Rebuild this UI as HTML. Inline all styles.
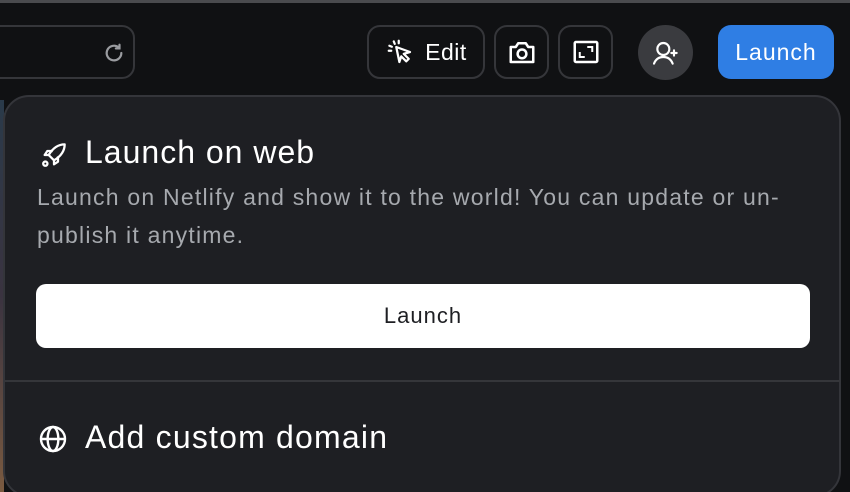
<!DOCTYPE html>
<html><head><meta charset="utf-8"><style>
*{margin:0;padding:0;box-sizing:border-box}
html,body{width:850px;height:492px;overflow:hidden}
body{background:#101113;position:relative;font-family:"Liberation Sans",sans-serif;color:#fff}
.strip{position:absolute;left:0;top:0;width:850px;height:3px;background:#4a4b4e}
.bb{position:absolute;top:25px;height:54px;border:2px solid #35363a;border-radius:13px;display:flex;align-items:center;justify-content:center}
.panel{position:absolute;left:3px;top:95px;width:838px;height:402px;background:#1e1f23;border:2px solid #34353a;border-radius:26px}
.left{position:absolute;left:0;top:100px;width:4px;height:392px;background:linear-gradient(#2a3a4a,#3a3340 50%,#7a5a40)}
</style></head><body>
<div class="strip"></div>
<div class="bb" style="left:-20px;width:155px">
<svg style="position:absolute;left:121px;top:15px" width="22" height="22" viewBox="0 0 24 24" fill="none" stroke="#9a9ca0" stroke-width="2.4" stroke-linecap="round"><path d="M20 12a8 8 0 1 1-3-6.2"/><path d="M18 3v4h-4"/></svg>
</div>
<div class="bb" style="left:367px;width:118px;gap:10px;font-size:23px;letter-spacing:0.5px">
<svg width="30" height="30" viewBox="0 0 24 24" fill="none" stroke="#fff" stroke-width="1.8" stroke-linejoin="round" stroke-linecap="round"><path d="M9 8l11 4-5 1.5 4 4-2 2-4-4L11.5 20z"/><path d="M7 3.5l.8 2M3.5 7l2 .8M3 11h2M11 3v2"/></svg><span>Edit</span></div>
<div class="bb" style="left:494px;width:55px">
<svg width="30" height="30" viewBox="0 0 24 24" fill="none" stroke="#fff" stroke-width="2" stroke-linejoin="round"><path d="M3 8h4l2-3h6l2 3h4v12H3z"/><circle cx="12" cy="13.5" r="3.5"/></svg></div>
<div class="bb" style="left:558px;width:55px">
<svg width="30" height="30" viewBox="0 0 24 24" fill="none" stroke="#fff" stroke-width="2"><rect x="3" y="4" width="18" height="16" rx="1"/><path d="M7 12v4h4M17 12V8h-4" stroke-width="1.6"/></svg></div>
<div style="position:absolute;left:638px;top:25px;width:55px;height:55px;border-radius:50%;background:#3a3b3f;display:flex;align-items:center;justify-content:center">
<svg width="32" height="32" viewBox="0 0 24 24" fill="none" stroke="#fff" stroke-width="1.6" stroke-linecap="round"><circle cx="10" cy="9" r="4.5"/><path d="M3 20c1.5-4 4-5 7-5s5.5 1 7 5M18 10v4M16 12h4"/></svg></div>
<div style="position:absolute;left:718px;top:25px;width:116px;height:54px;background:#2f7ee4;border-radius:13px;display:flex;align-items:center;justify-content:center;font-size:23px;letter-spacing:1px">Launch</div>
<div class="left"></div>
<div class="panel">
<svg style="position:absolute;left:33px;top:42px" width="32" height="32" viewBox="0 0 24 24" fill="none" stroke="#fff" stroke-width="1.7" stroke-linejoin="round"><path d="M20 4c-5 0-9 3-12 8l4 4c5-3 8-7 8-12z"/><path d="M8 12l-3 0 2-3h4M12 16v3l3-2v-4"/><circle cx="5.5" cy="18.5" r="1.6"/></svg>
<div style="position:absolute;left:80px;top:37px;font-size:32px;letter-spacing:1px">Launch on web</div>
<div style="position:absolute;left:32px;top:81px;width:790px;font-size:23px;letter-spacing:1.22px;line-height:38px;color:#a6a9ae;white-space:nowrap">Launch on Netlify and show it to the world! You can update or un-<br>publish it anytime.</div>
<div style="position:absolute;left:31px;top:187px;width:774px;height:64px;background:#fff;border-radius:10px;color:#1e1f23;font-size:22px;letter-spacing:1px;display:flex;align-items:center;justify-content:center">Launch</div>
<div style="position:absolute;left:0;top:283px;width:836px;height:2px;background:#35363a"></div>
<svg style="position:absolute;left:32px;top:326px" width="32" height="32" viewBox="0 0 24 24" fill="none" stroke="#fff" stroke-width="1.8"><circle cx="12" cy="12" r="9"/><ellipse cx="12" cy="12" rx="4" ry="9"/><path d="M3 12h18"/></svg>
<div style="position:absolute;left:80px;top:322px;font-size:32px;letter-spacing:1.2px">Add custom domain</div>
</div>
</body></html>
